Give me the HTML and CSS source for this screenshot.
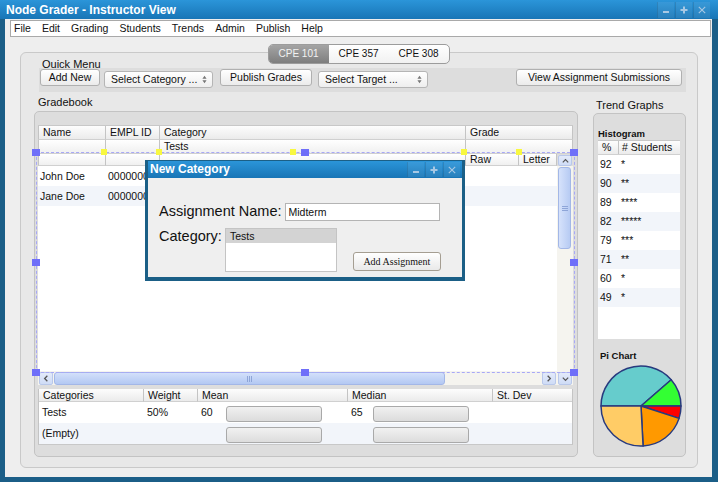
FILE: index.html
```html
<!DOCTYPE html>
<html lang="en">
<head>
<meta charset="utf-8">
<title>Node Grader - Instructor View</title>
<link rel="stylesheet" href="styles.css">
</head>
<body>
<div class="window">
  <div class="titlebar">
    <div class="title">Node Grader - Instructor View</div>
    <div class="wbtns">
      <span class="wb"><svg viewBox="0 0 8 8" class="wico"><rect x="1" y="5" width="6" height="2"/></svg></span>
      <span class="wb"><svg viewBox="0 0 8 8" class="wico"><path d="M3 0.5h2v2.5h2.5v2h-2.5v2.5h-2v-2.5h-2.5v-2h2.5z"/></svg></span>
      <span class="wb"><svg viewBox="0 0 8 8" class="wico"><path d="M1.2 0.4L4 3.2 6.8 0.4 7.6 1.2 4.8 4 7.6 6.8 6.8 7.6 4 4.8 1.2 7.6 0.4 6.8 3.2 4 0.4 1.2z"/></svg></span>
    </div>
  </div>
  <div class="client">
    <div class="menubar">
      <span>File</span><span>Edit</span><span>Grading</span><span>Students</span><span>Trends</span><span>Admin</span><span>Publish</span><span>Help</span>
    </div>
    <div class="tabs">
      <span class="tab sel">CPE 101</span><span class="tab">CPE 357</span><span class="tab">CPE 308</span>
    </div>
    <div class="panel">
      <div class="qlabel">Quick Menu</div>
      <div class="toolbar">
        <div class="btn b-add">Add New</div>
        <div class="select s-cat"><span>Select Category ...</span><svg class="ud" viewBox="0 0 6 10"><path d="M3 0.5L5.5 4H0.5z M3 9.5L5.5 6H0.5z"/></svg></div>
        <div class="btn b-pub">Publish Grades</div>
        <div class="select s-tgt"><span>Select Target ...</span><svg class="ud" viewBox="0 0 6 10"><path d="M3 0.5L5.5 4H0.5z M3 9.5L5.5 6H0.5z"/></svg></div>
        <div class="btn b-view">View Assignment Submissions</div>
      </div>
      <div class="main">
        <div class="gcol">
          <div class="glabel">Gradebook</div>
          <div class="gbox">
            <div class="grid">
              <div class="hrow hr1">
                <div class="c w-name">Name</div><div class="c w-empl">EMPL ID</div><div class="c w-cat">Category</div><div class="c w-grade">Grade</div>
              </div>
              <div class="hrow hr2">
                <div class="c w-name"></div><div class="c w-empl"></div><div class="c w-cat">Tests</div><div class="c w-grade"></div>
              </div>
              <div class="hrow hr3">
                <div class="c w-name"></div><div class="c w-empl"></div><div class="c w-cat"></div><div class="c w-raw">Raw</div><div class="c w-letter">Letter</div>
                <div class="sbtn up"><svg viewBox="0 0 10 6" class="chev"><path d="M2 4.5L5 1.5 8 4.5"/></svg></div>
              </div>
              <div class="gbody">
                <div class="rows">
                  <div class="r"><div class="d d1">John Doe</div><div class="d d2">00000000</div></div>
                  <div class="r alt"><div class="d d1">Jane Doe</div><div class="d d2">00000000</div></div>
                </div>
                <div class="vscroll">
                  <div class="vthumb"><div class="hgrip"></div></div>
                </div>
              </div>
              <div class="hscroll">
                <div class="sbtn left"><svg viewBox="0 0 6 10" class="chev"><path d="M4.5 2L1.5 5 4.5 8"/></svg></div>
                <div class="hthumb"><div class="vgrip"></div></div>
                <div class="htrack"></div>
                <div class="sbtn right"><svg viewBox="0 0 6 10" class="chev"><path d="M1.5 2L4.5 5 1.5 8"/></svg></div>
                <div class="sbtn down"><svg viewBox="0 0 10 6" class="chev"><path d="M2 1.5L5 4.5 8 1.5"/></svg></div>
              </div>
            </div>
            <div class="stats">
              <div class="shead">
                <div class="c s1">Categories</div><div class="c s2">Weight</div><div class="c s3">Mean</div><div class="c s4">Median</div><div class="c s5">St. Dev</div>
              </div>
              <div class="srow">
                <div class="sc s1">Tests</div><div class="sc s2">50%</div>
                <div class="sc s3"><span class="mnum">60</span><span class="bar"></span></div>
                <div class="sc s4"><span class="dnum">65</span><span class="bar"></span></div>
                <div class="sc s5"></div>
              </div>
              <div class="srow alt">
                <div class="sc s1">(Empty)</div><div class="sc s2"></div>
                <div class="sc s3"><span class="mnum"></span><span class="bar"></span></div>
                <div class="sc s4"><span class="dnum"></span><span class="bar"></span></div>
                <div class="sc s5"></div>
              </div>
            </div>
            <div class="selrect"></div>
            <span class="hd hd1"></span><span class="hd hd2"></span><span class="hd hd3"></span><span class="hd hd4"></span>
            <span class="hd hd5"></span><span class="hd hd6"></span><span class="hd hd7"></span><span class="hd hd8"></span>
            <span class="yd yd1"></span><span class="yd yd2"></span><span class="yd yd3"></span><span class="yd yd4"></span><span class="yd yd5"></span>
          </div>
        </div>
        <div class="tcol">
          <div class="tlabel">Trend Graphs</div>
          <div class="tbox">
            <div class="blabel">Histogram</div>
            <div class="hist">
              <div class="hhead"><div class="hp">%</div><div class="hs"># Students</div></div>
              <div class="hr"><span class="hv">92</span><span class="st">*</span></div>
              <div class="hr alt"><span class="hv">90</span><span class="st">**</span></div>
              <div class="hr"><span class="hv">89</span><span class="st">****</span></div>
              <div class="hr alt"><span class="hv">82</span><span class="st">*****</span></div>
              <div class="hr"><span class="hv">79</span><span class="st">***</span></div>
              <div class="hr alt"><span class="hv">71</span><span class="st">**</span></div>
              <div class="hr"><span class="hv">60</span><span class="st">*</span></div>
              <div class="hr alt"><span class="hv">49</span><span class="st">*</span></div>
            </div>
            <div class="blabel pil">Pi Chart</div>
            <svg class="pie" viewBox="0 0 82 82">
              <g stroke="#283a7e" stroke-width="1.5" stroke-linejoin="round">
                <path fill="#66cccc" d="M41 41 L71.19 14.76 A40 40 0 0 0 1 41 Z"/>
                <path fill="#33ff33" d="M41 41 L81 41 A40 40 0 0 0 71.19 14.76 Z"/>
                <path fill="#ff0000" d="M41 41 L79.04 53.36 A40 40 0 0 0 81 41 Z"/>
                <path fill="#ff9900" d="M41 41 L43.09 80.94 A40 40 0 0 0 79.04 53.36 Z"/>
                <path fill="#ffcc66" d="M41 41 L1 41 A40 40 0 0 0 43.09 80.94 Z"/>
              </g>
            </svg>
          </div>
        </div>
      </div>
    </div>
  </div>
  <div class="dialog">
    <div class="dtitle">
      <span class="dtext">New Category</span>
      <div class="dbtns">
        <span class="wb"><svg viewBox="0 0 8 8" class="wico"><rect x="1" y="5" width="6" height="2"/></svg></span>
        <span class="wb"><svg viewBox="0 0 8 8" class="wico"><path d="M3 0.5h2v2.5h2.5v2h-2.5v2.5h-2v-2.5h-2.5v-2h2.5z"/></svg></span>
        <span class="wb"><svg viewBox="0 0 8 8" class="wico"><path d="M1.2 0.4L4 3.2 6.8 0.4 7.6 1.2 4.8 4 7.6 6.8 6.8 7.6 4 4.8 1.2 7.6 0.4 6.8 3.2 4 0.4 1.2z"/></svg></span>
      </div>
    </div>
    <div class="dbody">
      <div class="drow1"><span class="dlabel">Assignment Name:</span><div class="input">Midterm</div></div>
      <div class="drow2">
        <span class="dlabel dl2">Category:</span>
        <div class="listbox"><div class="li">Tests</div></div>
        <div class="abtn">Add Assignment</div>
      </div>
    </div>
  </div>
</div>
</body>
</html>
```

FILE: styles.css
```css
* { box-sizing: border-box; }
body { margin: 0; font-family: "Liberation Sans", Arial, sans-serif; font-size: 10.5px; color: #111; }

.window { position: relative; width: 718px; height: 482px; background: #1b5e87; display: flex; flex-direction: column; overflow: hidden; }

.titlebar { height: 19px; display: flex; justify-content: space-between; background: linear-gradient(#2b95d9, #1875b6); flex: none; }
.title { padding-left: 6px; color: #fff; font-weight: bold; font-size: 12px; line-height: 21px; white-space: nowrap; }
.wbtns { display: flex; gap: 1px; margin: 2px 8px 0 0; }
.wb { width: 17px; height: 16px; display: flex; align-items: center; justify-content: center; background: rgba(255,255,255,0.07); border-left: 1px solid rgba(0,0,0,0.12); }
.wico { width: 8px; height: 8px; fill: #a7c8e4; }

.client { flex: 1; margin: 0 6px 5px 5px; background: #eeeeee; display: flex; flex-direction: column; }

.menubar { margin: 1px 1px 0 5px; height: 17px; border: 1px solid #a9a9a9; background: #fff; display: flex; gap: 11px; padding-left: 3px; line-height: 15px; flex: none; }

.tabs { align-self: center; margin-top: 7px; height: 20px; display: flex; border: 1px solid #9c9c9c; border-radius: 5px; overflow: hidden; position: relative; z-index: 1; background: linear-gradient(#ffffff, #f1f1f1); flex: none; }
.tab { width: 60px; text-align: center; line-height: 18px; font-size: 10px; color: #111; }
.tab.sel { background: linear-gradient(#a4a4a4, #7e7e7e); color: #f2f2f2; }

.panel { margin: -12px 14px 0 15px; height: 416px; border: 1px solid #c9c9c9; border-radius: 6px; background: #e8e8e8; display: flex; flex-direction: column; flex: none; }
.qlabel { margin: 4px 0 0 21px; height: 11px; line-height: 15px; font-size: 11px; }
.toolbar { margin: 0 11px 0 18px; height: 24px; background: #dddddd; display: flex; align-items: flex-start; padding: 1px 0 0 1px; flex: none; }
.btn { height: 17px; border: 1px solid #b0b0b0; border-radius: 3px; background: linear-gradient(#ffffff, #ebebeb); line-height: 15px; text-align: center; white-space: nowrap; }
.b-add { width: 60px; }
.b-pub { width: 92px; margin-left: 7px; }
.b-view { width: 166px; margin-left: auto; margin-right: 4px; }
.select { height: 17px; margin-top: 2px; border: 1px solid #b5b5b5; border-radius: 3px; background: linear-gradient(#ffffff, #eeeeee); display: flex; align-items: center; justify-content: space-between; padding: 0 5px 0 6px; line-height: 15px; white-space: nowrap; }
.s-cat { width: 109px; margin-left: 4px; }
.s-tgt { width: 110px; margin-left: 6px; }
.ud { width: 5px; height: 9px; fill: #777; }

.main { flex: 1; display: flex; padding-bottom: 10px; }
.gcol { width: 544px; margin-left: 13px; display: flex; flex-direction: column; }
.glabel { margin: 4px 0 0 4px; line-height: 13px; height: 13px; font-size: 11px; }
.gbox { flex: 1; margin-top: 2px; border: 1px solid #c3c3c3; border-radius: 5px; background: #dddddd; position: relative; padding: 13px 0 0 3px; }

.grid { width: 535px; border-top: 1px solid #c8c8c8; }
.hrow { display: flex; }
.c { border-right: 1px solid #c4c4c4; border-bottom: 1px solid #d0d0d0; padding-left: 4px; background: linear-gradient(#fdfdfd, #ebebeb); overflow: hidden; white-space: nowrap; }
.hr1 .c { height: 14px; line-height: 13px; }
.hr2 .c { height: 14px; line-height: 13px; background: linear-gradient(#ffffff, #f0f0f0); }
.hr3 .c { height: 12px; line-height: 11px; background: linear-gradient(#ffffff, #f0f0f0); }
.w-name { width: 68px; border-left: 1px solid #c4c4c4; }
.w-empl { width: 54px; }
.w-cat { width: 306px; }
.w-grade { width: 107px; }
.w-raw { width: 53px; }
.w-letter { width: 38px; }

.sbtn { background: linear-gradient(#e3eafa, #cfdcf6); border: 1px solid #b9c8ea; border-radius: 2px; display: flex; align-items: center; justify-content: center; }
.chev { fill: none; stroke: #555; stroke-width: 1.4; }
.sbtn.up { width: 14px; height: 11px; margin: 1px 1px 0 1px; }
.sbtn.up .chev, .sbtn.down .chev { width: 9px; height: 6px; }
.sbtn.left, .sbtn.right { width: 14px; height: 13px; margin-top: 1px; }
.sbtn.left .chev, .sbtn.right .chev { width: 6px; height: 9px; }
.sbtn.down { width: 14px; height: 13px; margin: 1px 1px 0 2px; }

.gbody { display: flex; height: 205px; }
.rows { width: 519px; background: #fff; }
.r { display: flex; height: 20px; line-height: 20px; }
.r.alt { background: #f2f5fa; }
.d { white-space: nowrap; overflow: hidden; }
.d1 { width: 68px; padding-left: 2px; }
.d2 { width: 54px; padding-left: 2px; }
.vscroll { width: 16px; background: #f5f4ef; padding: 1px 2px 0 1px; }
.vthumb { height: 82px; border: 1px solid #a3b7e7; border-radius: 3px; background: linear-gradient(90deg, #d6e2fb, #b7cbf3); display: flex; align-items: center; justify-content: center; }
.hgrip { width: 6px; height: 5px; background: repeating-linear-gradient(#8ea5d8 0 1px, transparent 1px 2px); }

.hscroll { display: flex; height: 14px; background: #f5f4ef; }
.sbtn.left { margin-left: 1px; }
.hthumb { width: 391px; margin: 1px 0 0 1px; height: 13px; border: 1px solid #a3b7e7; border-radius: 3px; background: linear-gradient(#d3e0fa, #b3c8f3); display: flex; align-items: center; justify-content: center; }
.vgrip { width: 5px; height: 6px; background: repeating-linear-gradient(90deg, #8ea5d8 0 1px, transparent 1px 2px); }
.htrack { flex: 1; }

.stats { width: 535px; margin-top: 4px; border-left: 1px solid #c4c4c4; border-right: 1px solid #c4c4c4; border-bottom: 1px solid #c8c8c8; }
.shead { display: flex; }
.shead .c { height: 13px; line-height: 12px; border-left: none; }
.shead .s5 { border-right: none; }
.s1 { width: 105px; }
.s2 { width: 54px; }
.s3 { width: 150px; }
.s4 { width: 145px; }
.s5 { flex: 1; }
.srow { display: flex; height: 21px; background: #fff; }
.srow.alt { background: #f2f5fa; }
.sc { padding-left: 3px; line-height: 21px; display: flex; align-items: flex-start; white-space: nowrap; }
.mnum { width: 25px; flex: none; }
.dnum { width: 22px; flex: none; }
.bar { width: 96px; height: 16px; margin-top: 4px; border: 1px solid #a9a9a9; border-radius: 3px; background: linear-gradient(#f1f1f1, #dcdcdc); flex: none; }

.selrect { position: absolute; left: 1px; top: 40px; width: 539px; height: 221px; border: 1px dashed #a8a8f6; pointer-events: none; }
.hd { position: absolute; width: 8px; height: 7px; background: #6f6ff9; }
.hd1 { left: -3px; top: 37px; }
.hd2 { left: 266px; top: 37px; }
.hd3 { left: 535px; top: 37px; }
.hd4 { left: -3px; top: 147px; }
.hd5 { left: 535px; top: 147px; }
.hd6 { left: -3px; top: 257px; }
.hd7 { left: 266px; top: 257px; }
.hd8 { left: 535px; top: 257px; }
.yd { position: absolute; top: 37px; width: 6px; height: 6px; background: #f8f840; }
.yd1 { left: 66px; }
.yd2 { left: 121px; }
.yd3 { left: 255px; }
.yd4 { left: 426px; }
.yd5 { left: 481px; }

.tcol { width: 93px; margin-left: 15px; display: flex; flex-direction: column; }
.tlabel { margin: 7px 0 0 3px; line-height: 13px; height: 13px; font-size: 11px; white-space: nowrap; }
.tbox { flex: 1; margin-top: 1px; border: 1px solid #c3c3c3; border-radius: 5px; background: #dddddd; padding: 14px 5px 0 4px; }
.blabel { height: 12px; line-height: 12px; font-weight: bold; font-size: 9.5px; }
.pil { margin: 11px 0 0 2px; }
.hist { width: 82px; height: 199px; background: #fff; border-top: 1px solid #c8c8c8; }
.hhead { display: flex; height: 14px; line-height: 13px; background: linear-gradient(#fdfdfd, #ebebeb); border-bottom: 1px solid #d0d0d0; }
.hp { width: 21px; padding-left: 4px; border-right: 1px solid #c4c4c4; }
.hs { padding-left: 3px; white-space: nowrap; }
.hr { display: flex; height: 19px; line-height: 19px; }
.hr.alt { background: #f2f5fa; }
.hv { width: 23px; padding-left: 2px; }
.st { letter-spacing: 0; }
.pie { display: block; width: 82px; height: 82px; margin: 3px 0 0 2px; }

.dialog { position: absolute; left: 145px; top: 160px; width: 320px; height: 121px; border: 3px solid #1b5f86; border-top-width: 1px; border-bottom-width: 4px; background: #efefef; z-index: 5; display: flex; flex-direction: column; }
.dtitle { height: 17px; display: flex; justify-content: space-between; background: linear-gradient(#2b95d9, #1875b6); flex: none; }
.dtext { padding-left: 2px; color: #fff; font-weight: bold; font-size: 12px; line-height: 17px; }
.dbtns { display: flex; gap: 1px; margin: 1px 2px 0 0; }
.dbtns .wb { height: 15px; }
.dbody { flex: 1; padding: 24px 0 0 11px; }
.drow1 { display: flex; align-items: center; height: 19px; }
.dlabel { font-size: 14.5px; line-height: 19px; white-space: nowrap; }
.input { width: 155px; height: 18px; margin-left: 3px; background: #fff; border: 1px solid #b4b4b4; padding-left: 3px; line-height: 16px; }
.drow2 { display: flex; align-items: flex-start; margin-top: 7px; }
.dl2 { line-height: 17px; }
.listbox { width: 112px; height: 44px; margin-left: 3px; background: #fff; border: 1px solid #c4c4c4; }
.li { height: 14px; line-height: 14px; background: #d3d3d3; padding-left: 4px; }
.abtn { width: 88px; height: 19px; margin: 24px 0 0 16px; border: 1px solid #a59e92; border-radius: 3px; background: linear-gradient(#ffffff, #e9e9e9); font-family: "Liberation Serif", "Times New Roman", serif; font-size: 10px; line-height: 17px; text-align: center; white-space: nowrap; }
```
